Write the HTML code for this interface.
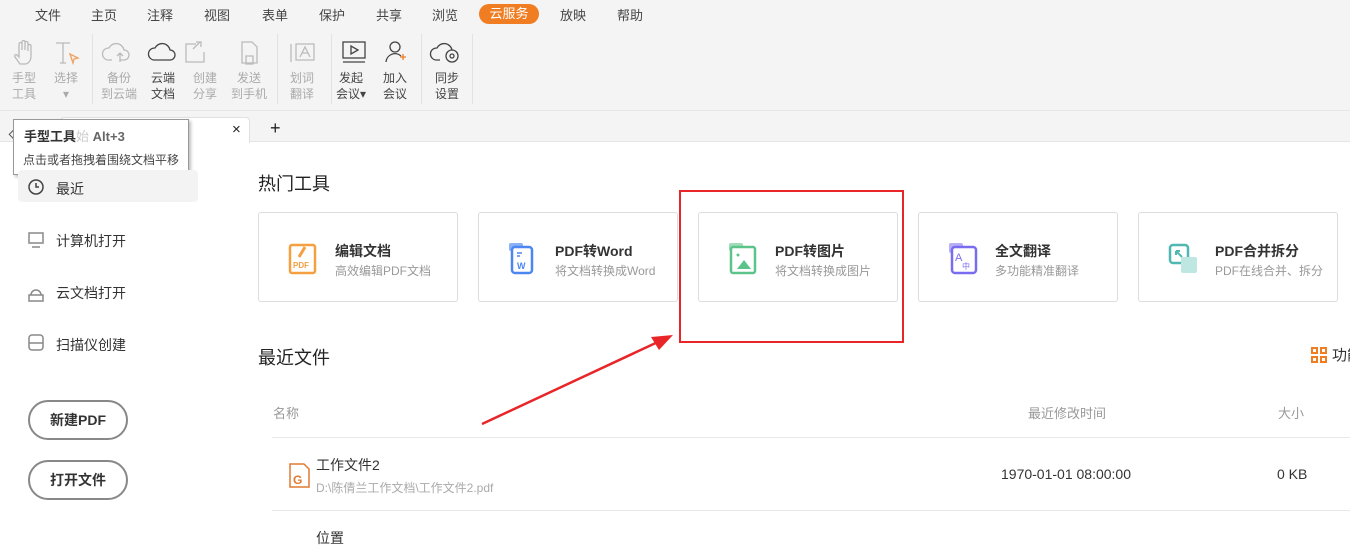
<!DOCTYPE html>
<html><head><meta charset="utf-8"><style>
*{margin:0;padding:0;box-sizing:border-box}
body{width:1350px;height:534px;overflow:hidden;background:#fff;font-family:"Liberation Sans","Noto Sans CJK SC",sans-serif;position:relative;color:#333}
.abs{position:absolute;white-space:nowrap}
.top{left:0;top:0;width:1350px;height:110px;background:#f4f4f4}
.menu span{position:absolute;top:5px;font-size:13px;color:#444}
.tb{position:absolute;font-size:12px;line-height:16px;text-align:center;top:70px;color:#aaa}
.tb.d{color:#444}
.sep{position:absolute;top:34px;width:1px;height:70px;background:#e2e2e2}
.tabbar{left:0;top:110px;width:1350px;height:32px;background:#f4f4f4;border-bottom:1px solid #e6e6e6;border-top:1px solid #e6e6e6}
.card{position:absolute;top:212px;width:200px;height:90px;border:1px solid #ddd;border-radius:3px;background:#fff}
.card .t{position:absolute;left:76px;top:28px;font-size:14px;font-weight:bold;color:#333;white-space:nowrap}
.card .s{position:absolute;left:76px;top:49px;font-size:12px;color:#999;white-space:nowrap}
.card svg{position:absolute;left:28px;top:28px}
.side{position:absolute;left:56px;font-size:14px;color:#333}
.btn{position:absolute;left:28px;width:100px;height:40px;border:2px solid #888;border-radius:20px;text-align:center;line-height:36px;font-size:14px;font-weight:bold;color:#333}
</style></head><body>
<div class="abs top"></div>
<div class="menu">
<span style="left:35px">文件</span><span style="left:91px">主页</span><span style="left:147px">注释</span><span style="left:204px">视图</span><span style="left:262px">表单</span><span style="left:319px">保护</span><span style="left:376px">共享</span><span style="left:432px">浏览</span>
<span style="left:479px;top:4px;width:60px;height:20px;background:#f07d22;border-radius:10px;color:#fff;text-align:center;line-height:19px">云服务</span>
<span style="left:560px">放映</span><span style="left:617px">帮助</span>
</div>
<svg class="abs" style="left:0;top:38px" width="480" height="30" fill="none" stroke-width="1.3">
<g stroke="#bbb"><path d="M20 26 l-5-7 c-1-2 1-3 2-2 l2 2 V6 c0-2 3-2 3 0 v6 V4 c0-2 3-2 3 0 v8 V5 c0-2 3-2 3 0 v8 V8 c0-2 3-2 3 0 v10 c0 5-3 8-6 8z"/>
<path d="M56 5 h14 M63 5 v20 M60 25 h6"/><path d="M70 16 l8 4 -4 1 -1 4z" stroke="#f0a060"/>
<path d="M112 22 h-4 a6 6 0 0 1 1-12 a8 8 0 0 1 15 2 a5 5 0 0 1 0 10 h-4 M120 24 v-9 M117 18 l3-3 3 3"/>
<path d="M196 6 h-10 v18 h18 v-10 M200 4 l-7 7 M196 4 h5 v5" /><path d="M242 4 h10 l5 5 v16 h-15z M246 18 h7 v8 h-7z"/>
<path d="M291 6 v18 M296 6 h18 v16 h-18z M300 19 l5-10 5 10 M302 15 h6"/></g>
<g stroke="#444"><path d="M158 22 h-4 a6 6 0 0 1 1-12 a8 8 0 0 1 15 2 a5 5 0 0 1 0 10 h-12"/>
<rect x="343" y="4" width="22" height="16"/><path d="M351 8 v8 l7-4z M343 24 h22"/>
<circle cx="395" cy="9" r="5"/><path d="M386 24 a9 9 0 0 1 15-6"/>
<path d="M440 22 h-4 a6 6 0 0 1 1-12 a8 8 0 0 1 15 2"/><circle cx="452" cy="18" r="6"/><circle cx="452" cy="18" r="2"/></g>
<path d="M400 19 h6 M403 16 v6" stroke="#f07d22"/>
</svg>
<div class="tb" style="left:12px">手型<br>工具</div>
<div class="tb" style="left:54px">选择<br>▾</div>
<div class="tb" style="left:101px">备份<br>到云端</div>
<div class="tb d" style="left:151px">云端<br>文档</div>
<div class="tb" style="left:193px">创建<br>分享</div>
<div class="tb" style="left:231px">发送<br>到手机</div>
<div class="tb" style="left:290px">划词<br>翻译</div>
<div class="tb d" style="left:336px">发起<br>会议▾</div>
<div class="tb d" style="left:383px">加入<br>会议</div>
<div class="tb d" style="left:435px">同步<br>设置</div>
<div class="sep" style="left:92px"></div><div class="sep" style="left:277px"></div><div class="sep" style="left:331px"></div><div class="sep" style="left:421px"></div><div class="sep" style="left:472px"></div>
<div class="abs tabbar"></div>
<div class="abs" style="left:60px;top:117px;width:190px;height:26px;background:#fff;border:1px solid #e0e0e0;border-bottom:none;border-radius:4px 4px 0 0"></div>
<div class="abs" style="left:232px;top:121px;font-size:15px;color:#222">×</div>
<div class="abs" style="left:270px;top:118px;font-size:18px;color:#222">+</div>
<div class="abs" style="left:10px;top:128px;width:14px;height:10px;border:1px solid #555;transform:rotate(-45deg)"></div>
<div class="abs" style="left:13px;top:119px;width:176px;height:56px;background:#fff;border:1px solid #999;box-shadow:2px 2px 3px rgba(0,0,0,.25)">
<div class="abs" style="left:10px;top:6px;font-size:13px;font-weight:bold;color:#333">手型工具<span style="color:#ccc;font-weight:normal">始</span> <span style="color:#666">Alt+3</span></div>
<div class="abs" style="left:9px;top:31px;font-size:12px;color:#444">点击或者拖拽着围绕文档平移</div>
</div>
<div class="abs" style="left:18px;top:170px;width:180px;height:32px;background:#f3f3f3;border-radius:4px"></div>
<svg class="abs" style="left:26px;top:178px" width="20" height="180" fill="none" stroke-width="1.5">
<circle cx="10" cy="9" r="7" stroke="#444"/><path d="M10 5 v4 h3" stroke="#444"/>
<g stroke="#888"><rect x="3" y="55" width="14" height="10"/><path d="M6 69 h8"/>
<path d="M3 117 h14 v6 h-14z M5 117 a5 5 0 0 1 10 0"/>
<rect x="3" y="157" width="14" height="15" rx="3"/><path d="M3 165 h14"/></g></svg>
<div class="side" style="top:179px">最近</div>
<div class="side" style="top:231px">计算机打开</div>
<div class="side" style="top:283px">云文档打开</div>
<div class="side" style="top:335px">扫描仪创建</div>
<div class="btn" style="top:400px">新建PDF</div>
<div class="btn" style="top:460px">打开文件</div>
<div class="abs" style="left:258px;top:170px;font-size:18px;color:#222">热门工具</div>
<div class="card" style="left:258px"><svg width="32" height="34"><rect x="3" y="4" width="25" height="28" rx="2" fill="none" stroke="#f5a040" stroke-width="2.5"/><path d="M18 6 l-6 10" stroke="#f5a040" stroke-width="3"/><text x="6" y="27" font-size="8" font-weight="bold" fill="#f5a040" font-family="Liberation Sans">PDF</text></svg><div class="t">编辑文档</div><div class="s">高效编辑PDF文档</div></div>
<div class="card" style="left:478px"><svg width="32" height="34"><rect x="2" y="2" width="14" height="8" rx="2" fill="#8ab0f5"/><rect x="5" y="6" width="20" height="26" rx="3" fill="#fff" stroke="#4d86f0" stroke-width="2.5"/><path d="M10 12 h5 M10 15 h3" stroke="#4d86f0" stroke-width="1.5"/><text x="10" y="28" font-size="9" font-weight="bold" fill="#4d86f0" font-family="Liberation Sans">W</text></svg><div class="t">PDF转Word</div><div class="s">将文档转换成Word</div></div>
<div class="card" style="left:698px"><svg width="32" height="34"><rect x="2" y="2" width="14" height="8" rx="2" fill="#a0dcb8"/><rect x="4" y="6" width="24" height="26" rx="2" fill="#fff" stroke="#5cc48a" stroke-width="2.5"/><circle cx="11" cy="14" r="1.5" fill="#5cc48a"/><path d="M10 28 l7-9 7 9z" fill="#5cc48a"/></svg><div class="t">PDF转图片</div><div class="s">将文档转换成图片</div></div>
<div class="card" style="left:918px"><svg width="32" height="34"><rect x="2" y="2" width="14" height="10" rx="2" fill="#b8b0f5"/><rect x="5" y="6" width="24" height="26" rx="3" fill="#fff" stroke="#7a6cf0" stroke-width="2.5"/><text x="8" y="20" font-size="11" fill="#7a6cf0" font-family="Liberation Sans">A</text><text x="15" y="28" font-size="8" fill="#7a6cf0" font-family="Noto Sans CJK SC">中</text></svg><div class="t">全文翻译</div><div class="s">多功能精准翻译</div></div>
<div class="card" style="left:1138px"><svg width="32" height="34"><rect x="3" y="4" width="18" height="18" rx="3" fill="#fff" stroke="#4fb8b0" stroke-width="2.5"/><path d="M9 10 l6 6 M9 10 h4 M9 10 v4" stroke="#4fb8b0" stroke-width="2"/><rect x="14" y="16" width="16" height="16" rx="2" fill="#bfe7e2"/></svg><div class="t">PDF合并拆分</div><div class="s">PDF在线合并、拆分</div></div>
<div class="abs" style="left:258px;top:344px;font-size:18px;color:#222">最近文件</div>
<svg class="abs" style="left:1311px;top:347px" width="16" height="16" fill="none" stroke="#f07d22" stroke-width="2"><rect x="1" y="1" width="5" height="5"/><rect x="10" y="1" width="5" height="5"/><rect x="1" y="10" width="5" height="5"/><rect x="10" y="10" width="5" height="5"/></svg>
<div class="abs" style="left:1332px;top:344px;font-size:15px;color:#333">功能</div>
<div class="abs" style="left:273px;top:403px;font-size:13px;color:#999">名称</div>
<div class="abs" style="left:1028px;top:403px;font-size:13px;color:#999">最近修改时间</div>
<div class="abs" style="left:1278px;top:403px;font-size:13px;color:#999">大小</div>
<div class="abs" style="left:272px;top:437px;width:1078px;height:1px;background:#e8e8e8"></div>
<div class="abs" style="left:272px;top:510px;width:1078px;height:1px;background:#e8e8e8"></div>
<svg class="abs" style="left:288px;top:462px" width="22" height="28"><path d="M2 2 h14 l5 5 v18 h-19z" fill="#fff" stroke="#e07a30" stroke-width="1.5"/><text x="5" y="22" font-size="12" font-weight="bold" fill="#e07a30" font-family="Liberation Sans">G</text></svg>
<div class="abs" style="left:316px;top:455px;font-size:14px;color:#333">工作文件2</div>
<div class="abs" style="left:316px;top:479px;font-size:12px;color:#aaa">D:\陈倩兰工作文档\工作文件2.pdf</div>
<div class="abs" style="left:1001px;top:466px;font-size:14px;color:#333">1970-01-01 08:00:00</div>
<div class="abs" style="left:1277px;top:466px;font-size:14px;color:#333">0 KB</div>
<div class="abs" style="left:316px;top:528px;font-size:14px;color:#333">位置</div>
<div class="abs" style="left:679px;top:190px;width:225px;height:153px;border:2px solid #e8262a"></div>
<svg class="abs" style="left:0;top:0" width="1350" height="534"><path d="M482 424 L660 341" stroke="#e8262a" stroke-width="2.5"/><path d="M673 335 L651 337 L659 350z" fill="#e8262a"/></svg>
</body></html>
